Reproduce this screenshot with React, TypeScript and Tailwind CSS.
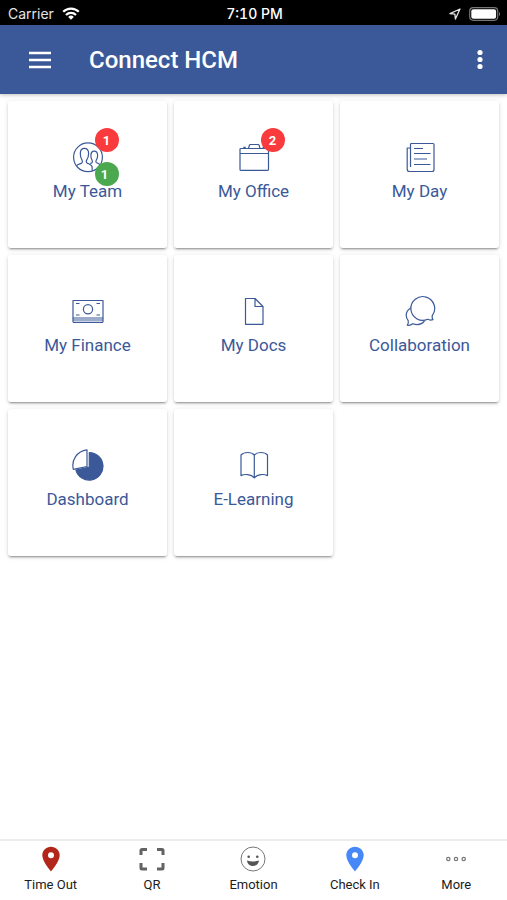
import type { ReactNode } from "react";

type Badge = { count: number; tone: "alert" | "ok" };
type Tile = { label: string; icon: ReactNode; badges?: Badge[] };
type Action = { label: string; icon: ReactNode };

const badgeStyles = {
  alert: "-top-[13px] bg-[#f93b3e]",
  ok: "top-[21px] bg-[#4aa84e] pr-1"
};

const tiles: Tile[] = [
  {
    label: "My Team",
    badges: [
      { count: 1, tone: "alert" },
      { count: 1, tone: "ok" }
    ],
    icon: (
      <>
        <circle cx="16" cy="16.3" r="14.4" />
        <path d="M4.6 24.6c1.6-1.5 4-1.8 5.2-2.7.7-.6.6-2.3.1-3.2C8.6 17 8.3 15 8.3 12.6c0-3.2 1.5-5.2 4.1-5.2s4.2 2 4.2 5.2c0 2.4-.5 4.4-1.7 6.1-.6.9-.6 2.6.1 3.2 1.3 1 4.4 1.5 5 3.6.3 1.2.2 3 .2 4.2" />
        <path d="M18.3 22.6c.8-.4 1.7-.7 2-1.3.3-.7 0-1.7-.4-2.5-.7-1.2-1-2.6-1-4.4 0-2.6 1.2-4.2 3.3-4.2s3.4 1.6 3.4 4.2c0 1.8-.4 3.2-1.2 4.4-.5.8-.6 2-.2 2.5.8.9 2.7 1.1 3.9 2.4" />
      </>
    )
  },
  {
    label: "My Office",
    badges: [{ count: 2, tone: "alert" }],
    icon: (
      <>
        <rect x="2" y="7.5" width="28.5" height="21.8" rx="0.8" />
        <path d="M2 12.5h28.5M10.5 7.5l.9-3.3a1 1 0 0 1 1-.7h7.7a1 1 0 0 1 1 .7l.9 3.3" />
        <path d="M5.3 6.8h2.4M24.6 6.8H27" strokeWidth="2.2" />
      </>
    )
  },
  {
    label: "My Day",
    icon: (
      <>
        <path d="M6.5 26V3.5a1 1 0 0 1 1-1H29a1 1 0 0 1 1 1v25a2 2 0 0 1-2 2H5.5a2.3 2.3 0 0 1-2.3-2.3V7h3.3" />
        <path d="M10 7.5h9M10 12.5h16.5M10 18h13M10 23.5h16.5" />
      </>
    )
  },
  {
    label: "My Finance",
    icon: (
      <>
        <rect x="1" y="5.5" width="30" height="17.5" />
        <circle cx="16" cy="14.2" r="4.6" />
        <path d="M4 8.5h3.5M24.5 8.5H28M4 20h3.5M24.5 20H28M1 25h30M1 27.3h30M1 23v4.3M31 23v4.3" />
      </>
    )
  },
  {
    label: "My Docs",
    icon: <path d="M7.5 3.5h9.5l8 8v17.8H7.5zM17 3.5v8h8" />
  },
  {
    label: "Collaboration",
    icon: (
      <>
        <path d="M28.3 20.6A11.9 11.9 0 1 0 23.7 24.3c1.5.8 3.4 1 5.3.3-.9-1.1-1-2.5-.7-4z" />
        <path d="M7 12.8c-3 1.8-4.8 4.3-4.8 7.5 0 2 .8 3.7 1.9 5 .5 1.6.3 3.3-.8 4.9 2 .3 4-.2 5.5-1.5 4.4 1.5 9 .6 11.7-2.7" />
      </>
    )
  },
  {
    label: "Dashboard",
    icon: (
      <>
        <path d="M15 .8v16.7L1.3 20.3C-.8 11.5 4.8 1.8 15 .8z" />
        <path d="M17.3 3.5a13.8 13.8 0 1 1-13.4 17.6l13.4-2.9z" fill="currentColor" />
      </>
    )
  },
  {
    label: "E-Learning",
    icon: (
      <path d="M16.3 6C13.5 2.8 6 2.6 3 6v20.6c3.5-1.8 10-1.6 13.3 2.2 3.3-3.8 9.7-4 13.2-2.2V6c-3-3.4-10.4-3.2-13.2 0zv23" />
    )
  }
];

function Pin({ className }: { className: string }) {
  return (
    <svg viewBox="0 0 26 26" className={`size-[26px] ${className}`} fill="currentColor" aria-hidden="true">
      <path
        fillRule="evenodd"
        d="M13 .7c-4.8 0-8.7 3.8-8.7 8.6C4.3 15.7 13 25.5 13 25.5s8.7-9.8 8.7-16.2C21.7 4.5 17.8.7 13 .7zm0 5.6a3 3 0 1 1 0 6 3 3 0 0 1 0-6z"
      />
    </svg>
  );
}

const actions: Action[] = [
  { label: "Time Out", icon: <Pin className="text-[#b3261a]" /> },
  {
    label: "QR",
    icon: (
      <svg viewBox="0 0 26 26" className="size-[26px] text-[#626262]" fill="none" stroke="currentColor" strokeWidth="3" aria-hidden="true">
        <path d="M2 9V4.5a1 1 0 0 1 1-1h5M18 3.5h5a1 1 0 0 1 1 1V9M24 17v5a1 1 0 0 1-1 1h-5M8 23H3a1 1 0 0 1-1-1v-5" />
      </svg>
    )
  },
  {
    label: "Emotion",
    icon: (
      <svg viewBox="0 0 26 26" className="size-[26px] text-[#555555]" fill="currentColor" aria-hidden="true">
        <circle cx="13" cy="13" r="12" fill="none" stroke="#777777" />
        <circle cx="8.7" cy="10.7" r="1.3" />
        <circle cx="17.3" cy="10.7" r="1.3" />
        <path d="M7 14.5c3.8 1.2 8.2 1.2 12 0-.3 3.3-2.8 5.5-6 5.5s-5.7-2.2-6-5.5z" />
      </svg>
    )
  },
  { label: "Check In", icon: <Pin className="text-[#4688f7]" /> },
  {
    label: "More",
    icon: (
      <svg viewBox="0 0 26 26" className="size-[26px] text-[#777777]" fill="none" stroke="currentColor" strokeWidth="1.2" aria-hidden="true">
        <circle cx="5.3" cy="13" r="1.7" />
        <circle cx="13" cy="13" r="1.7" />
        <circle cx="20.7" cy="13" r="1.7" />
      </svg>
    )
  }
];

function StatusBar() {
  return (
    <div className="grid h-[25px] grid-cols-3 items-center bg-black pt-[2px] pr-[6px] pl-2 font-[Inter,sans-serif] text-sm text-[#e4e4e4]">
      <div className="flex items-center gap-2">
        <span>Carrier</span>
        <svg viewBox="0 0 18 13" className="h-[13px] w-[18px] text-white" fill="none" stroke="currentColor" strokeWidth="2.2" aria-hidden="true">
          <path d="M1.2 4.8a11 11 0 0 1 15.600 0M4 8a7 7 0 0 1 10 0" />
          <path d="M9 12.7 6.2 9.9a4 4 0 0 1 5.600 0z" fill="currentColor" stroke="none" />
        </svg>
      </div>
      <span className="text-center font-medium text-white tabular-nums">7:10 PM</span>
      <div className="flex items-center justify-end gap-2">
        <svg viewBox="0 0 12 12" className="size-3" fill="none" stroke="currentColor" strokeWidth="1.3" strokeLinejoin="round" aria-hidden="true">
          <path d="M11 1 1 5.7l4.9.4.5 4.9z" />
        </svg>
        <svg viewBox="0 0 32 14" className="h-[14px] w-8" aria-hidden="true">
          <rect x="0.7" y="0.7" width="28" height="12.6" rx="3.5" fill="none" stroke="#777777" strokeWidth="1.2" />
          <rect x="2.3" y="2.3" width="24.8" height="9.4" rx="2" fill="#ffffff" />
          <path d="M30 5c1.5.5 1.5 3.5 0 4z" fill="#777777" />
        </svg>
      </div>
    </div>
  );
}

function TileCard({ tile }: { tile: Tile }) {
  return (
    <button
      type="button"
      className="flex min-h-[147px] flex-col items-center gap-[6px] rounded-[3px] bg-white pt-10 text-[#3b5998] shadow-[0_3px_1px_-2px_rgba(0,0,0,0.2),0_2px_2px_0_rgba(0,0,0,0.14),0_1px_5px_0_rgba(0,0,0,0.12)]"
    >
      <span className="relative">
        <svg viewBox="0 0 32 32" className="size-8" fill="none" stroke="currentColor" strokeWidth="1.2" strokeLinejoin="round" aria-hidden="true">
          {tile.icon}
        </svg>
        {tile.badges?.map((b) => (
          <span
            key={b.tone}
            className={`absolute left-[23px] flex size-6 items-center justify-center rounded-full text-[13px] leading-none font-bold text-white ${badgeStyles[b.tone]}`}
          >
            {b.count}
          </span>
        ))}
      </span>
      <span className="text-[17px] leading-6">{tile.label}</span>
    </button>
  );
}

export default function App() {
  return (
    <div className="flex min-h-screen flex-col bg-white font-[Roboto,sans-serif]">
      <StatusBar />
      <header className="flex h-[69px] items-center bg-[#3b5998] pr-[15px] pl-7 text-white shadow-[0_1px_4px_rgba(0,0,0,0.25)]">
        <button type="button" aria-label="Menu">
          <svg viewBox="0 0 24 24" className="size-6" stroke="currentColor" strokeWidth="2.4" aria-hidden="true">
            <path d="M1 5h22M1 12h22M1 19h22" />
          </svg>
        </button>
        <h1 className="ml-[37px] flex-1 text-2xl font-medium">Connect HCM</h1>
        <button type="button" aria-label="More options">
          <svg viewBox="0 0 24 24" className="size-6" fill="currentColor" aria-hidden="true">
            <circle cx="12" cy="4.5" r="2.6" />
            <circle cx="12" cy="11.500" r="2.6" />
            <circle cx="12" cy="18.500" r="2.6" />
          </svg>
        </button>
      </header>

      <main className="flex-1 px-2 py-[7px]">
        <div className="grid grid-cols-3 gap-[7px]">
          {tiles.map((tile) => (
            <TileCard key={tile.label} tile={tile} />
          ))}
        </div>
      </main>

      <nav className="grid h-[61px] grid-cols-5 border-t-2 border-[#ececec] bg-white">
        {actions.map((action) => (
          <button key={action.label} type="button" className="flex flex-col items-center gap-[3px] pt-[5px] text-[13px] leading-5 text-[#1c1c1c]">
            {action.icon}
            {action.label}
          </button>
        ))}
      </nav>
    </div>
  );
}
